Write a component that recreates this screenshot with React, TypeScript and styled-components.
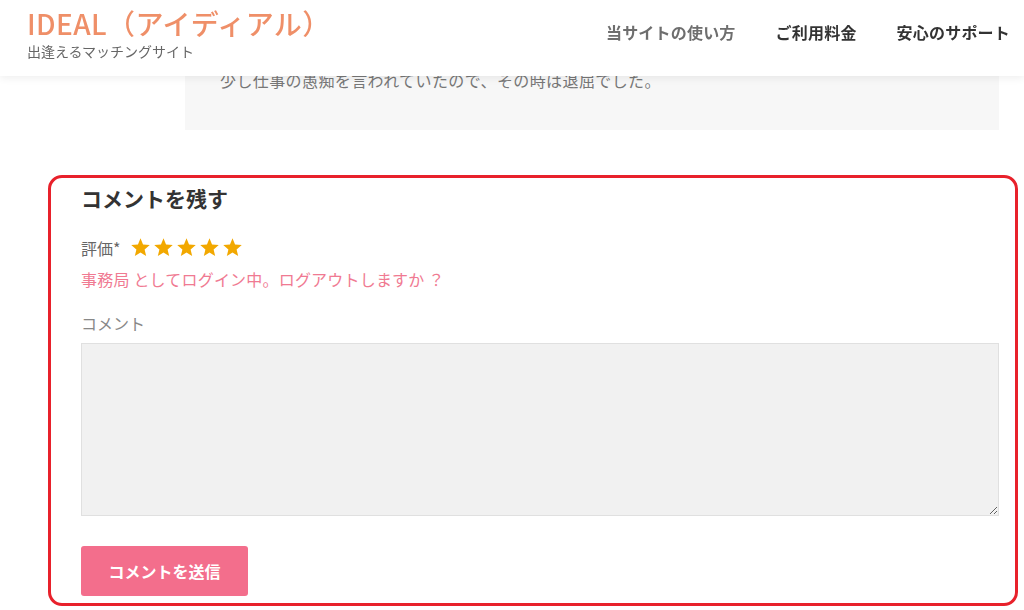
import React from "react";
import styled, { createGlobalStyle } from "styled-components";

const GlobalStyle = createGlobalStyle`
  html, body { margin: 0; padding: 0; background: #fff; }
  body {
    font-family: "Noto Sans CJK JP", "Noto Sans", "Liberation Sans", sans-serif;
    color: #333;
    width: 1024px;
    height: 610px;
    overflow: hidden;
  }
  * { box-sizing: border-box; }
`;

const Header = styled.header`
  position: fixed;
  top: 0;
  left: 0;
  right: 0;
  height: 76px;
  background: #fff;
  box-shadow: 0 2px 8px rgba(0, 0, 0, 0.07);
  display: flex;
  align-items: flex-start;
  justify-content: space-between;
  padding: 0 14px 0 27px;
  z-index: 10;
`;

const Brand = styled.div`
  display: flex;
  flex-direction: column;
  gap: 4px;
  padding-top: 8px;
`;

const Logo = styled.div`
  font-size: 28px;
  font-weight: 500;
  line-height: 30px;
  color: #ef8f68;
  letter-spacing: 0.4px;
`;

const Tagline = styled.div`
  font-size: 14px;
  line-height: 18px;
  color: #666;
`;

const Nav = styled.nav`
  display: flex;
  align-items: center;
  gap: 40px;
  padding-top: 20px;
`;

const NavItem = styled.a<{ $muted?: boolean }>`
  font-size: 16px;
  font-weight: 600;
  line-height: 24px;
  letter-spacing: 0.2px;
  color: ${(p) => (p.$muted ? "#6e6e6e" : "#333")};
  text-decoration: none;
`;

const Main = styled.main`
  display: flex;
  flex-direction: column;
`;

const ReviewBox = styled.div`
  margin-left: 185px;
  width: 814px;
  height: 130px;
  background: #f7f7f7;
  padding: 66px 0 0 35px;
`;

const ReviewText = styled.p`
  margin: 0;
  font-size: 16px;
  line-height: 28px;
  letter-spacing: 0.4px;
  color: #777;
`;

const CommentBox = styled.section`
  margin: 45px 0 0 48px;
  width: 970px;
  height: 431px;
  border: 3px solid #e8212b;
  border-radius: 14px;
  padding: 5px 16px 7px 30px;
  display: flex;
  flex-direction: column;
`;

const Heading = styled.h3`
  margin: 0;
  font-size: 21px;
  font-weight: 700;
  line-height: 30px;
  color: #333;
`;

const RatingRow = styled.div`
  margin-top: 23px;
  display: flex;
  align-items: center;
  height: 24px;
`;

const FieldLabel = styled.span`
  font-size: 16px;
  line-height: 24px;
  color: #666;
`;

const Stars = styled.div`
  display: flex;
  gap: 2px;
  margin-left: 10px;
  margin-top: -2px;
`;

const LoginLine = styled.p`
  margin: 7px 0 0;
  font-size: 16px;
  line-height: 24px;
  letter-spacing: 0.2px;
  color: #f07a92;
`;

const LoginLink = styled.a`
  color: #f07a92;
  text-decoration: none;
`;

const CommentLabel = styled.label`
  margin-top: 20px;
  font-size: 16px;
  line-height: 24px;
  color: #888;
`;

const TextArea = styled.textarea`
  margin-top: 8px;
  width: 918px;
  height: 173px;
  background: #f1f1f1;
  border: 1px solid #e0e0e0;
  border-radius: 0;
  font-family: inherit;
  font-size: 16px;
  outline: none;
  display: block;
`;

const Submit = styled.button`
  margin-top: 30px;
  width: 167px;
  height: 50px;
  background: #f36e8c;
  color: #fff;
  border: none;
  border-radius: 3px;
  font-family: inherit;
  font-size: 16px;
  font-weight: 700;
  cursor: pointer;
`;

const Star = () => (
  <svg width="21" height="21" viewBox="0 0 24 24">
    <polygon
      points="12,1.5 14.9,8.6 22.6,9.2 16.7,14.2 18.5,21.8 12,17.7 5.5,21.8 7.3,14.2 1.4,9.2 9.1,8.6"
      fill="#f2a800"
    />
  </svg>
);

export default function App() {
  return (
    <>
      <GlobalStyle />
      <Header>
        <Brand>
          <Logo>IDEAL（アイディアル）</Logo>
          <Tagline>出逢えるマッチングサイト</Tagline>
        </Brand>
        <Nav>
          <NavItem $muted>当サイトの使い方</NavItem>
          <NavItem>ご利用料金</NavItem>
          <NavItem>安心のサポート</NavItem>
        </Nav>
      </Header>
      <Main>
        <ReviewBox>
          <ReviewText>少し仕事の愚痴を言われていたので、その時は退屈でした。</ReviewText>
        </ReviewBox>
        <CommentBox>
          <Heading>コメントを残す</Heading>
          <RatingRow>
            <FieldLabel>評価*</FieldLabel>
            <Stars>
              {[0, 1, 2, 3, 4].map((i) => (
                <Star key={i} />
              ))}
            </Stars>
          </RatingRow>
          <LoginLine>
            <LoginLink>事務局</LoginLink> としてログイン中。<LoginLink>ログアウトしますか ？</LoginLink>
          </LoginLine>
          <CommentLabel>コメント</CommentLabel>
          <TextArea />
          <div>
            <Submit>コメントを送信</Submit>
          </div>
        </CommentBox>
      </Main>
    </>
  );
}
